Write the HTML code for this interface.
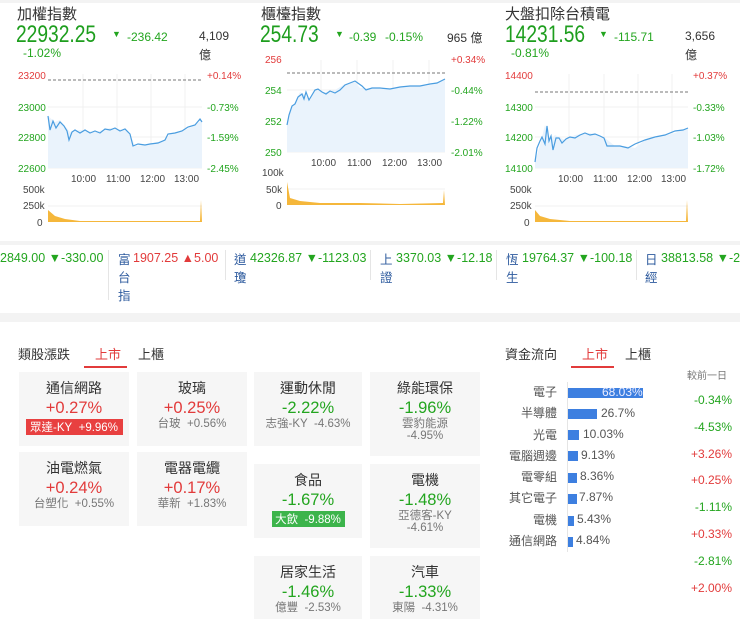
<!DOCTYPE html>
<html><head><meta charset="utf-8"><style>
*{margin:0;padding:0;box-sizing:border-box}
body{width:740px;height:619px;background:#f3f3f3;font-family:"Liberation Sans","Noto Sans CJK TC",sans-serif;position:relative;overflow:hidden;color:#333}
.a{position:absolute;white-space:nowrap}
.g{color:#23a51f}.r{color:#e23b3b}
.panel{position:absolute;background:#fff}
.t{font-size:15px;color:#333}
.big{font-size:24px;color:#1e9e1e;transform:scaleX(0.8);transform-origin:0 0}
.sm{font-size:12px}
.tick{font-size:12.5px}
.tk{color:#2e5b9e}
.card{position:absolute;background:#f6f6f6;text-align:center}
.card .n{font-size:14px;color:#333;margin-top:6px}
.card .p{font-size:16.5px;margin-top:1px}
.card .s{font-size:11.5px;color:#777;line-height:12px}
.flow{font-size:12px;color:#555}
</style></head><body>
<div class="panel" style="left:0;top:3px;width:740px;height:238px"></div>
<div class="panel" style="left:0;top:245px;width:740px;height:68px"></div>
<div class="panel" style="left:0;top:322px;width:740px;height:297px"></div>

<div class="a t" style="left:17px;top:3px">加權指數</div>
<div class="a big" style="left:16px;top:21px">22932.25</div>
<div class="a g" style="left:112px;top:29px;font-size:9px">▼</div>
<div class="a g sm" style="left:127px;top:30px">-236.42</div>
<div class="a sm" style="left:199px;top:29px">4,109</div>
<div class="a sm" style="left:199px;top:46px">億</div>
<div class="a g sm" style="left:23px;top:46px">-1.02%</div>

<div class="a t" style="left:261px;top:3px">櫃檯指數</div>
<div class="a big" style="left:260px;top:21px">254.73</div>
<div class="a g" style="left:335px;top:29px;font-size:9px">▼</div>
<div class="a g sm" style="left:349px;top:30px">-0.39</div>
<div class="a g sm" style="left:385px;top:30px">-0.15%</div>
<div class="a sm" style="left:447px;top:29px">965 億</div>

<div class="a t" style="left:505px;top:3px">大盤扣除台積電</div>
<div class="a big" style="left:505px;top:21px">14231.56</div>
<div class="a g" style="left:599px;top:29px;font-size:9px">▼</div>
<div class="a g sm" style="left:614px;top:30px">-115.71</div>
<div class="a sm" style="left:685px;top:29px">3,656</div>
<div class="a sm" style="left:685px;top:46px">億</div>
<div class="a g sm" style="left:511px;top:46px">-0.81%</div>

<svg class="a" style="left:0;top:0" width="740" height="240" font-family="Liberation Sans" font-size="10">
<g stroke="#f0f0f0" stroke-width="1">
<line x1="48" y1="107" x2="202" y2="107"/><line x1="48" y1="137" x2="202" y2="137"/><line x1="48" y1="168" x2="202" y2="168"/>
<line x1="83" y1="74" x2="83" y2="168"/><line x1="117" y1="74" x2="117" y2="168"/><line x1="151" y1="74" x2="151" y2="168"/><line x1="185" y1="74" x2="185" y2="168"/>
<line x1="48" y1="206" x2="202" y2="206"/>
</g>
<line x1="48" y1="80" x2="202" y2="80" stroke="#777" stroke-dasharray="3,2"/>
<polygon fill="#eaf3fc" points="48,116 55,122 60,120 65,126 70,132 80,130 95,132 110,128 125,130 130,134 135,146 150,144 165,140 170,134 185,130 195,125 202,120 202,168 48,168"/>
<polyline fill="none" stroke="#4a9de0" stroke-width="1.2" points="48,116 50,130 53,121 56,128 60,122 64,126 67,131 69,140 72,132 75,130 80,133 85,130 90,133 95,131 100,133 105,129 110,130 115,128 120,131 125,129 130,134 133,146 138,144 145,145 150,144 158,143 165,140 168,134 175,133 182,131 188,127 195,125 200,119 202,122"/>
<polygon fill="#f5b73b" points="48,210 55,216 65,219 80,221 130,221 160,221 200,221 201,200 202,222 48,222"/>
<g fill="#e23b3b"><text x="18" y="79">23200</text><text x="207" y="79">+0.14%</text></g>
<g fill="#23a51f"><text x="18" y="111">23000</text><text x="18" y="141">22800</text><text x="18" y="172">22600</text>
<text x="207" y="111">-0.73%</text><text x="207" y="141">-1.59%</text><text x="207" y="172">-2.45%</text></g>
<g fill="#444"><text x="71" y="182">10:00</text><text x="106" y="182">11:00</text><text x="140" y="182">12:00</text><text x="174" y="182">13:00</text>
<text x="23" y="193">500k</text><text x="23" y="209">250k</text><text x="37" y="226">0</text></g>

<g stroke="#f0f0f0"><line x1="287" y1="90" x2="445" y2="90"/><line x1="287" y1="121" x2="445" y2="121"/><line x1="287" y1="152" x2="445" y2="152"/>
<line x1="321" y1="60" x2="321" y2="152"/><line x1="357" y1="60" x2="357" y2="152"/><line x1="393" y1="60" x2="393" y2="152"/><line x1="429" y1="60" x2="429" y2="152"/>
<line x1="287" y1="189" x2="445" y2="189"/></g>
<line x1="287" y1="73" x2="445" y2="73" stroke="#777" stroke-dasharray="3,2"/>
<polygon fill="#eaf3fc" points="287,125 290,110 295,102 300,92 305,95 310,100 315,90 325,92 335,90 345,84 355,82 360,88 375,88 390,89 410,86 425,86 435,84 445,79 445,152 287,152"/>
<polyline fill="none" stroke="#4a9de0" stroke-width="1.2" points="287,125 289,115 292,106 295,104 298,97 302,94 304,99 306,92 309,100 312,95 315,90 318,89 322,92 326,94 330,91 335,93 340,90 345,85 355,81 362,86 366,90 372,88 380,88 390,89 400,87 410,86 420,86 430,84 437,83 445,79"/>
<polygon fill="#f5b73b" points="287,182 290,198 300,201 320,203 360,203 400,204 443,203 444,190 445,205 287,205"/>
<g fill="#e23b3b"><text x="265" y="63">256</text><text x="451" y="63">+0.34%</text></g>
<g fill="#23a51f"><text x="265" y="94">254</text><text x="265" y="125">252</text><text x="265" y="156">250</text>
<text x="451" y="94">-0.44%</text><text x="451" y="125">-1.22%</text><text x="451" y="156">-2.01%</text></g>
<g fill="#444"><text x="311" y="166">10:00</text><text x="347" y="166">11:00</text><text x="382" y="166">12:00</text><text x="417" y="166">13:00</text>
<text x="262" y="176">100k</text><text x="266" y="193">50k</text><text x="276" y="209">0</text></g>

<g stroke="#f0f0f0"><line x1="535" y1="107" x2="688" y2="107"/><line x1="535" y1="137" x2="688" y2="137"/><line x1="535" y1="168" x2="688" y2="168"/>
<line x1="569" y1="74" x2="569" y2="168"/><line x1="604" y1="74" x2="604" y2="168"/><line x1="638" y1="74" x2="638" y2="168"/><line x1="672" y1="74" x2="672" y2="168"/>
<line x1="535" y1="206" x2="688" y2="206"/></g>
<line x1="535" y1="92" x2="688" y2="92" stroke="#777" stroke-dasharray="3,2"/>
<polygon fill="#eaf3fc" points="535,162 540,145 545,125 550,140 555,135 565,140 575,135 590,133 605,138 615,146 625,146 635,148 645,140 660,137 675,133 688,128 688,168 535,168"/>
<polyline fill="none" stroke="#4a9de0" stroke-width="1.2" points="535,162 537,148 540,141 542,137 545,144 547,126 549,141 551,136 553,150 556,138 559,138 562,143 566,139 570,137 575,138 580,135 585,133 590,135 595,134 600,136 604,138 607,146 612,146 620,146 628,148 635,144 645,140 655,137 665,135 675,131 683,130 688,128"/>
<polygon fill="#f5b73b" points="535,210 540,216 550,219 570,221 640,221 686,221 687,200 688,222 535,222"/>
<g fill="#e23b3b"><text x="505" y="79">14400</text><text x="693" y="79">+0.37%</text></g>
<g fill="#23a51f"><text x="505" y="111">14300</text><text x="505" y="141">14200</text><text x="505" y="172">14100</text>
<text x="693" y="111">-0.33%</text><text x="693" y="141">-1.03%</text><text x="693" y="172">-1.72%</text></g>
<g fill="#444"><text x="558" y="182">10:00</text><text x="593" y="182">11:00</text><text x="627" y="182">12:00</text><text x="661" y="182">13:00</text>
<text x="510" y="193">500k</text><text x="510" y="209">250k</text><text x="524" y="226">0</text></g>
</svg>

<div class="a tick g" style="left:0;top:251px">2849.00 ▼-330.00</div>
<div class="a" style="left:108px;top:250px;width:1px;height:50px;background:#e5e5e5"></div>
<div class="a tick tk" style="left:118px;top:251px;line-height:18px;white-space:normal;width:12px">富<br>台<br>指</div>
<div class="a tick r" style="left:133px;top:251px">1907.25 ▲5.00</div>
<div class="a" style="left:225px;top:250px;width:1px;height:30px;background:#e5e5e5"></div>
<div class="a tick tk" style="left:234px;top:251px;line-height:18px">道<br>瓊</div>
<div class="a tick g" style="left:250px;top:251px">42326.87 ▼-1123.03</div>
<div class="a" style="left:370px;top:250px;width:1px;height:30px;background:#e5e5e5"></div>
<div class="a tick tk" style="left:380px;top:251px;line-height:18px">上<br>證</div>
<div class="a tick g" style="left:396px;top:251px">3370.03 ▼-12.18</div>
<div class="a" style="left:496px;top:250px;width:1px;height:30px;background:#e5e5e5"></div>
<div class="a tick tk" style="left:506px;top:251px;line-height:18px">恆<br>生</div>
<div class="a tick g" style="left:522px;top:251px">19764.37 ▼-100.18</div>
<div class="a" style="left:636px;top:250px;width:1px;height:30px;background:#e5e5e5"></div>
<div class="a tick tk" style="left:645px;top:251px;line-height:18px">日<br>經</div>
<div class="a tick g" style="left:661px;top:251px">38813.58 ▼-26</div>

<div class="a" style="left:18px;top:344px;font-size:13px">類股漲跌</div>
<div class="a r" style="left:95px;top:344px;font-size:13px">上市</div>
<div class="a" style="left:84px;top:366px;width:43px;height:2px;background:#e23b3b"></div>
<div class="a" style="left:138px;top:344px;font-size:13px">上櫃</div>

<div class="card" style="left:19px;top:372px;width:110px;height:74px"><div class="n">通信網路</div><div class="p r">+0.27%</div><div style="display:inline-block;background:#e84040;color:#fff;font-size:11.5px;padding:0 3px;width:97px">眾達-KY&nbsp;&nbsp;+9.96%</div></div>
<div class="card" style="left:137px;top:372px;width:110px;height:74px"><div class="n">玻璃</div><div class="p r">+0.25%</div><div class="s">台玻&nbsp;&nbsp;+0.56%</div></div>
<div class="card" style="left:254px;top:372px;width:108px;height:74px"><div class="n">運動休閒</div><div class="p g">-2.22%</div><div class="s">志強-KY&nbsp;&nbsp;-4.63%</div></div>
<div class="card" style="left:370px;top:372px;width:110px;height:84px"><div class="n">綠能環保</div><div class="p g">-1.96%</div><div class="s">雲豹能源<br>-4.95%</div></div>
<div class="card" style="left:19px;top:452px;width:110px;height:74px"><div class="n">油電燃氣</div><div class="p r">+0.24%</div><div class="s">台塑化&nbsp;&nbsp;+0.55%</div></div>
<div class="card" style="left:137px;top:452px;width:110px;height:74px"><div class="n">電器電纜</div><div class="p r">+0.17%</div><div class="s">華新&nbsp;&nbsp;+1.83%</div></div>
<div class="card" style="left:254px;top:464px;width:108px;height:74px"><div class="n">食品</div><div class="p g">-1.67%</div><div style="display:inline-block;background:#3cb44b;color:#fff;font-size:11.5px;padding:0 3px;width:73px">大飲&nbsp;&nbsp;-9.88%</div></div>
<div class="card" style="left:370px;top:464px;width:110px;height:84px"><div class="n">電機</div><div class="p g">-1.48%</div><div class="s">亞德客-KY<br>-4.61%</div></div>
<div class="card" style="left:254px;top:556px;width:108px;height:63px"><div class="n">居家生活</div><div class="p g">-1.46%</div><div class="s">億豐&nbsp;&nbsp;-2.53%</div></div>
<div class="card" style="left:370px;top:556px;width:110px;height:63px"><div class="n">汽車</div><div class="p g">-1.33%</div><div class="s">東陽&nbsp;&nbsp;-4.31%</div></div>

<div class="a" style="left:505px;top:344px;font-size:13px">資金流向</div>
<div class="a r" style="left:582px;top:344px;font-size:13px">上市</div>
<div class="a" style="left:571px;top:366px;width:43px;height:2px;background:#e23b3b"></div>
<div class="a" style="left:625px;top:344px;font-size:13px">上櫃</div>
<div class="a" style="left:687px;top:367px;font-size:10px;color:#777">較前一日</div>
<div class="a" style="left:567px;top:382px;width:1px;height:170px;background:#e5e5e5"></div>
<div class="a flow" style="left:495px;top:382px;width:62px;text-align:right;line-height:21.3px">電子<br>半導體<br>光電<br>電腦週邊<br>電零組<br>其它電子<br>電機<br>通信網路</div>
<div class="a" style="left:568px;top:388px;width:75px;height:10px;background:#3d7fe0"></div>
<div class="a" style="left:602px;top:385px;font-size:12px;color:#eef">68.03%</div>
<div class="a" style="left:568px;top:409px;width:29px;height:10px;background:#3d7fe0"></div>
<div class="a flow" style="left:601px;top:406px">26.7%</div>
<div class="a" style="left:568px;top:430px;width:11px;height:10px;background:#3d7fe0"></div>
<div class="a flow" style="left:583px;top:427px">10.03%</div>
<div class="a" style="left:568px;top:451px;width:10px;height:10px;background:#3d7fe0"></div>
<div class="a flow" style="left:581px;top:448px">9.13%</div>
<div class="a" style="left:568px;top:473px;width:9px;height:10px;background:#3d7fe0"></div>
<div class="a flow" style="left:580px;top:469px">8.36%</div>
<div class="a" style="left:568px;top:494px;width:9px;height:10px;background:#3d7fe0"></div>
<div class="a flow" style="left:579px;top:490px">7.87%</div>
<div class="a" style="left:568px;top:516px;width:6px;height:10px;background:#3d7fe0"></div>
<div class="a flow" style="left:577px;top:512px">5.43%</div>
<div class="a" style="left:568px;top:537px;width:5px;height:10px;background:#3d7fe0"></div>
<div class="a flow" style="left:576px;top:533px">4.84%</div>
<div class="a" style="left:660px;top:387px;width:72px;text-align:right;font-size:12px;line-height:26.8px"><span class="g">-0.34%</span><br><span class="g">-4.53%</span><br><span class="r">+3.26%</span><br><span class="r">+0.25%</span><br><span class="g">-1.11%</span><br><span class="r">+0.33%</span><br><span class="g">-2.81%</span><br><span class="r">+2.00%</span></div>
</body></html>
